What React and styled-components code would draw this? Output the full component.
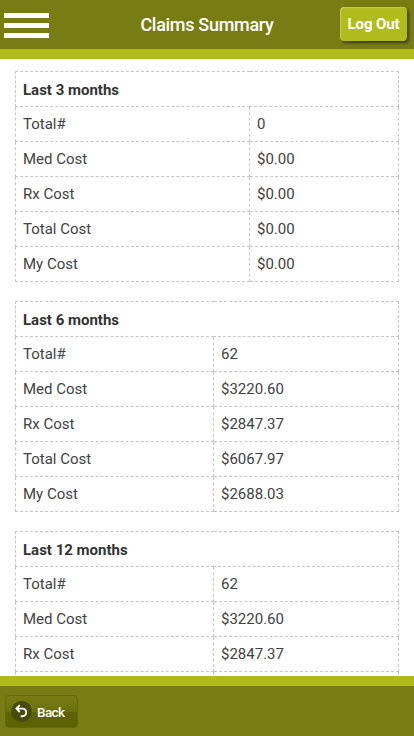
import styled, { createGlobalStyle } from 'styled-components';

const colors = {
  olive: '#787d13',
  lime: '#b0bc1c',
  text: '#333',
  cellText: '#424242',
  dash: '#c6c6c6',
};

const GlobalStyle = createGlobalStyle`
  * {
    box-sizing: border-box;
  }

  body {
    margin: 0;
    background: #fff;
    font-family: Roboto, sans-serif;
    color: ${colors.text};
  }
`;

const Page = styled.div`
  height: 100vh;
  display: flex;
  flex-direction: column;
  overflow: hidden;
`;

const Header = styled.header`
  flex: none;
  height: 59px;
  display: grid;
  grid-template-columns: 1fr auto 1fr;
  align-items: center;
  padding: 0 7px 0 4px;
  background: ${colors.olive};
  border-bottom: 10px solid ${colors.lime};
`;

const MenuButton = styled.button`
  width: 45px;
  padding: 0;
  border: none;
  background: none;
  display: flex;
  flex-direction: column;
  gap: 5px;
  margin-top: 2px;
  cursor: pointer;

  & > span {
    height: 5px;
    background: #fff;
  }
`;

const Title = styled.h1`
  margin: 0;
  padding-left: 3px;
  font-size: 18px;
  line-height: 48px;
  font-weight: 500;
  letter-spacing: -0.3px;
  color: #fff;
`;

const LogoutButton = styled.button`
  justify-self: end;
  width: 67px;
  height: 34px;
  margin-top: -1px;
  padding: 0;
  border: none;
  border-radius: 4px;
  background: ${colors.lime};
  box-shadow: 2px 2px 3px rgba(0, 0, 0, 0.5), inset 1px 1px 1px rgba(255, 255, 255, 0.25);
  font-family: inherit;
  font-size: 15px;
  font-weight: 700;
  letter-spacing: -0.1px;
  color: #fff;
  cursor: pointer;
`;

const Content = styled.main`
  flex: 1;
  min-height: 0;
  overflow-y: auto;
  scrollbar-width: none;
  padding: 12px 15px 0;
`;

const ClaimsTable = styled.table`
  width: 384px;
  margin-bottom: 19px;
  table-layout: fixed;
  border-collapse: collapse;
  font-size: 15px;
  line-height: 20px;
`;

const LabelCol = styled.col`
  width: ${({ width }) => width}px;
`;

const Cell = styled.td`
  height: 35px;
  padding: 0 7px;
  border: 1px dashed ${colors.dash};
  text-align: left;
  color: ${colors.cellText};
`;

const HeadingCell = styled(Cell).attrs({ as: 'th' })`
  font-weight: 700;
  padding-top: 2px;
  color: ${colors.text};
`;

const Footer = styled.footer`
  flex: none;
  height: 60px;
  display: flex;
  align-items: center;
  padding: 1px 5px 0;
  background: ${colors.olive};
  border-top: 10px solid ${colors.lime};
`;

const BackButton = styled.button`
  width: 73px;
  height: 33px;
  display: flex;
  align-items: center;
  gap: 5px;
  padding: 0 0 0 5px;
  border: 1px solid #63680d;
  border-radius: 4px;
  background: linear-gradient(#777c13 0%, #6c710f 50%, #5d6204 51%, #5d6203 100%);
  font-family: inherit;
  font-size: 13.5px;
  font-weight: 500;
  line-height: 20px;
  letter-spacing: -0.6px;
  color: #fff;
  cursor: pointer;
`;

const IconDisc = styled.span`
  width: 21px;
  height: 21px;
  border-radius: 50%;
  background: #484b0c;
  display: flex;
  align-items: center;
  justify-content: center;
`;

const periods = [
  { title: 'Last 3 months', labelWidth: 234, total: '0', med: '$0.00', rx: '$0.00', cost: '$0.00', mine: '$0.00' },
  { title: 'Last 6 months', labelWidth: 198, total: '62', med: '$3220.60', rx: '$2847.37', cost: '$6067.97', mine: '$2688.03' },
  { title: 'Last 12 months', labelWidth: 198, total: '62', med: '$3220.60', rx: '$2847.37', cost: '$6067.97', mine: '$2688.03' },
];

const rows = [
  ['Total#', 'total'],
  ['Med Cost', 'med'],
  ['Rx Cost', 'rx'],
  ['Total Cost', 'cost'],
  ['My Cost', 'mine'],
];

const App = () => (
  <Page>
    <GlobalStyle />
    <Header>
      <MenuButton aria-label="Menu">
        <span />
        <span />
        <span />
      </MenuButton>
      <Title>Claims Summary</Title>
      <LogoutButton>Log Out</LogoutButton>
    </Header>
    <Content>
      {periods.map((period) => (
        <ClaimsTable key={period.title}>
          <colgroup>
            <LabelCol width={period.labelWidth} />
            <col />
          </colgroup>
          <tbody>
            <tr>
              <HeadingCell colSpan={2}>{period.title}</HeadingCell>
            </tr>
            {rows.map(([label, key]) => (
              <tr key={key}>
                <Cell>{label}</Cell>
                <Cell>{period[key]}</Cell>
              </tr>
            ))}
          </tbody>
        </ClaimsTable>
      ))}
    </Content>
    <Footer>
      <BackButton>
        <IconDisc>
          <svg width="15" height="15" viewBox="0 0 15 15">
            <path d="M3.5 4.6H8.3A3.8 3.8 0 0 1 8.5 12.2H6.7" fill="none" stroke="#fff" strokeWidth="1.9" />
            <path d="M5.7 1.2L2.5 4.6L5.7 8" fill="none" stroke="#fff" strokeWidth="1.9" />
          </svg>
        </IconDisc>
        Back
      </BackButton>
    </Footer>
  </Page>
);

export default App;
